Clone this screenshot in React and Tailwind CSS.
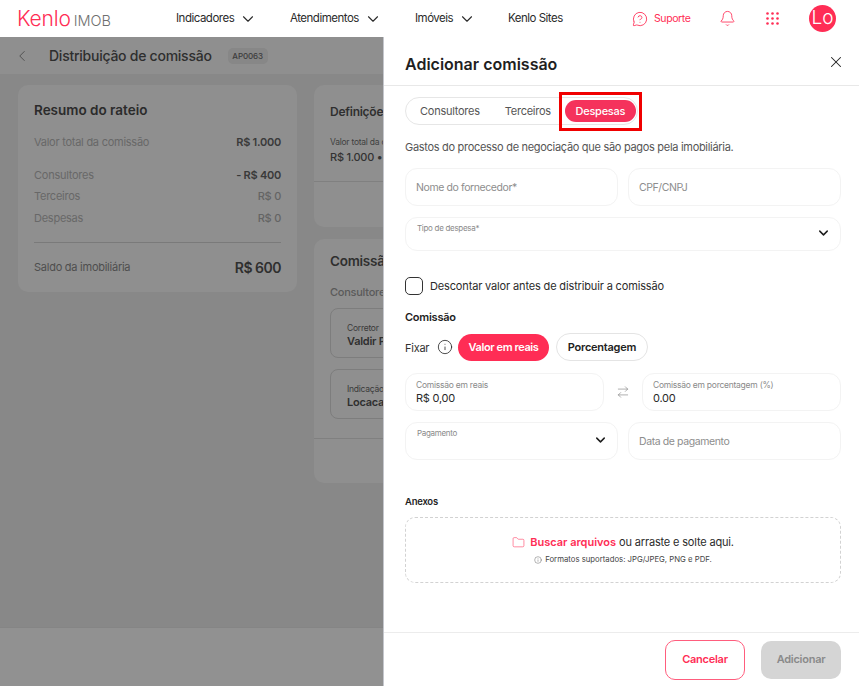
import React from 'react';
import { ChevronDown, ChevronLeft, X, Info, ArrowRightLeft, Bell, Folder, MessageCircleQuestion } from 'lucide-react';

const font = { fontFamily: 'Inter, "Noto Sans", sans-serif' };

const NavItem = ({ label, arrow = true, className = '' }) => (
  <div className={`flex items-center gap-[5px] text-[11.5px] tracking-[-0.5px] text-[#2b2b2b] ${className}`}>
    <span>{label}</span>
    {arrow && <ChevronDown size={18} strokeWidth={1.5} />}
  </div>
);

const Row = ({ label, value, strong }) => (
  <div className="flex items-center justify-between text-[11px]">
    <span className="text-[#686868]">{label}</span>
    <span className={strong ? 'font-semibold text-[#3a3a3a]' : 'font-medium text-[#646464]'}>{value}</span>
  </div>
);

const Field = ({ label, className = '' }) => (
  <div className={`flex h-[38px] items-center rounded-[12px] border border-[#f3f3f3] px-[10px] pt-px text-[10.5px] tracking-[-0.4px] text-[#8d8d8d] ${className}`}>
    {label}
  </div>
);

const SelectField = ({ label, className = '' }) => (
  <div className={`relative rounded-[12px] border border-[#f3f3f3] pl-[11px] pr-[10px] ${className}`}>
    <span className="absolute top-[4px] text-[8px] tracking-[-0.3px] text-[#8a8a8a]">{label}</span>
    <ChevronDown size={15} strokeWidth={2.4} className="absolute right-[9px] top-1/2 -mt-px -translate-y-1/2 text-[#1f1f1f]" />
  </div>
);

const ValueField = ({ label, value }) => (
  <div className="flex h-[38px] flex-1 flex-col justify-center rounded-[12px] border border-[#f3f3f3] px-[10px]">
    <span className="text-[8.5px] leading-[11px] text-[#8a8a8a]">{label}</span>
    <span className="text-[11px] leading-[14px] text-[#2a2a2a]">{value}</span>
  </div>
);

const GridIcon = () => (
  <svg width="13" height="13" viewBox="0 0 13 13" fill="#ff2d55">
    {[1.5, 6.5, 11.5].map((y) =>
      [1.5, 6.5, 11.5].map((x) => <circle key={`${x}-${y}`} cx={x} cy={y} r="1.3" />)
    )}
  </svg>
);

export default function App() {
  return (
    <div style={font} className="flex h-[686px] w-[859px] flex-col overflow-hidden bg-white tracking-[-0.25px]">
      {/* Top bar */}
      <header className="flex h-[37px] shrink-0 items-center bg-white">
        <div className="ml-[17px] flex w-[159px] items-baseline">
          <span className="text-[21px] font-light leading-none tracking-[-0.2px] text-[#ff2d55]">Kenlo</span>
          <span className="ml-[3px] text-[14.5px] font-light leading-none tracking-normal text-[#6f6f6f]">IMOB</span>
        </div>
        <NavItem label="Indicadores" className="w-[114px]" />
        <NavItem label="Atendimentos" className="w-[125px]" />
        <NavItem label="Imóveis" className="w-[93px]" />
        <NavItem label="Kenlo Sites" arrow={false} className="w-[124px]" />
        <div className="flex w-[87px] items-center gap-[6px] text-[10.5px] tracking-[-0.4px] text-[#ff2d55]">
          <MessageCircleQuestion size={16} strokeWidth={1.3} />
          <span>Suporte</span>
        </div>
        <Bell size={17} strokeWidth={1.2} className="text-[#ff2d55]" />
        <div className="ml-[30px]"><GridIcon /></div>
        <div className="ml-[30px] flex h-[27px] w-[27px] items-center justify-center rounded-full bg-[#ff2d55] text-[19px] font-light tracking-normal text-white">
          Lo
        </div>
      </header>

      <div className="flex min-h-0 flex-1">
        {/* Dimmed page behind the drawer */}
        <div className="flex w-[383px] shrink-0 flex-col overflow-hidden bg-[#888888] text-[#2f2f2f]">
          <div className="flex h-[37px] shrink-0 items-center bg-[#8f8f8f] pl-[13px]">
            <ChevronLeft size={18} strokeWidth={1} className="text-[#3d3d3d]" />
            <span className="ml-[18px] whitespace-nowrap text-[14px] font-medium text-[#2e2e2e]">Distribuição de comissão</span>
            <span className="ml-[16px] flex h-[16px] w-[40px] shrink-0 items-center justify-center rounded-[5px] bg-[#878787] text-[8px] font-medium tracking-[-0.1px] text-[#3c3c3c]">AP0063</span>
          </div>

          <div className="flex min-h-0 flex-1 items-start gap-[17px] pl-[18px] pt-[11px]">
            <section className="flex h-[207px] w-[279px] shrink-0 flex-col rounded-[10px] bg-[#8f8f8f] px-[16px] pt-[16px]">
              <h2 className="text-[13.5px] font-semibold leading-[18px] tracking-normal text-[#2b2b2b]">Resumo do rateio</h2>
              <div className="mt-[15px]"><Row label="Valor total da comissão" value="R$ 1.000" strong /></div>
              <div className="mt-[16px] flex flex-col gap-[5px]">
                <Row label="Consultores" value="- R$ 400" strong />
                <Row label="Terceiros" value="R$ 0" />
                <Row label="Despesas" value="R$ 0" />
              </div>
              <div className="mt-[16px] border-t border-[#7a7a7a]" />
              <div className="mt-[14px] flex items-center justify-between">
                <span className="text-[11px] text-[#4e4e4e]">Saldo da imobiliária</span>
                <span className="text-[14px] font-semibold tracking-[-0.5px] text-[#2f2f2f]">R$ 600</span>
              </div>
            </section>

            <div className="flex w-[200px] shrink-0 flex-col gap-[12px]">
              <section className="h-[142px] rounded-[10px] bg-[#8f8f8f]">
                <div className="h-[97px] whitespace-nowrap border-b border-[#808080] pl-[16px] pt-[19px]">
                  <h2 className="text-[12px] font-semibold leading-[16px] text-[#2f2f2f]">Definições</h2>
                  <p className="mt-[17px] text-[8.5px] leading-[11px] text-[#3f3f3f]">Valor total da comissão</p>
                  <p className="mt-[2px] text-[11px] font-medium leading-[14px] text-[#333]">R$ 1.000 • 10%</p>
                </div>
              </section>
              <section className="h-[244px] rounded-[10px] bg-[#8f8f8f]">
                <div className="h-[200px] whitespace-nowrap border-b border-[#808080] pl-[16px] pt-[13px]">
                  <h2 className="text-[13.5px] font-semibold leading-[18px] text-[#2f2f2f]">Comissão</h2>
                  <p className="mt-[15px] text-[11px] font-medium leading-[14px] text-[#5a5a5a]">Consultores</p>
                  <div className="mt-[9px] h-[50px] rounded-[8px] border border-[#7d7d7d] pl-[16px] pt-[14px]">
                    <p className="text-[8.5px] leading-[11px] text-[#3a3a3a]">Corretor</p>
                    <p className="text-[11px] font-semibold leading-[15px] text-[#2f2f2f]">Valdir Pereira</p>
                  </div>
                  <div className="mt-[11px] h-[50px] rounded-[8px] border border-[#7d7d7d] pl-[16px] pt-[14px]">
                    <p className="text-[8.5px] leading-[11px] text-[#3a3a3a]">Indicação</p>
                    <p className="text-[11px] font-semibold leading-[15px] text-[#2f2f2f]">Locacao</p>
                  </div>
                </div>
              </section>
            </div>
          </div>

          <div className="h-[59px] shrink-0 border-t border-[#858585] bg-[#919191]" />
        </div>

        {/* Drawer */}
        <aside className="flex w-[476px] flex-col border-l border-[#c4c6cc] bg-white">
          <div className="flex h-[49px] shrink-0 items-center justify-between border-b border-[#e8e8e8] pl-[21px] pr-[14px] pt-[5px]">
            <h1 className="text-[16px] font-semibold tracking-normal text-[#1f1f1f]">Adicionar comissão</h1>
            <X size={18} strokeWidth={1.4} className="-mt-[3px] text-[#222]" />
          </div>

          <div className="min-h-0 flex-1 pl-[21px] pr-[18px]">
            <div className="relative mt-[11px] flex h-[28px] w-[233px] items-center rounded-full border border-[#e6e6e6] text-[11px] text-[#555]">
              <span className="ml-[14px]">Consultores</span>
              <span className="ml-[25px]">Terceiros</span>
              <span className="ml-[14px] flex h-[22px] w-[71px] items-center justify-center rounded-full bg-[#f5325c] font-medium text-white">Despesas</span>
              <div className="absolute left-[153px] top-[-6px] h-[39px] w-[83px] border-[3px] border-[#f00000]" />
            </div>

            <p className="mt-[14px] text-[11px] leading-[16px] tracking-[-0.3px] text-[#555]">Gastos do processo de negociação que são pagos pela imobiliária.</p>

            <div className="mt-[13px] flex gap-[10px]">
              <Field label="Nome do fornecedor*" className="w-[213px]" />
              <Field label="CPF/CNPJ" className="flex-1" />
            </div>
            <SelectField label="Tipo de despesa*" className="mt-[11px] h-[34px]" />

            <label className="mt-[26px] flex items-center gap-[7px]">
              <span className="h-[18px] w-[18px] rounded-[5px] border border-[#333]" />
              <span className="pt-px text-[11px] tracking-[-0.15px] text-[#2b2b2b]">Descontar valor antes de distribuir a comissão</span>
            </label>

            <h3 className="mt-[15px] text-[11px] font-semibold leading-[14px] text-[#1f1f1f]">Comissão</h3>

            <div className="mt-[9px] flex items-center">
              <span className="w-[25px] pt-px text-[11px] leading-[14px] text-[#333]">Fixar</span>
              <Info size={16} strokeWidth={1.2} className="ml-[7px] text-[#222]" />
              <span className="ml-[5px] flex h-[27px] w-[91px] items-center justify-center rounded-full bg-[#ff2d55] text-[11px] font-semibold tracking-[-0.4px] text-white">Valor em reais</span>
              <span className="ml-[7px] flex h-[28px] w-[92px] items-center justify-center rounded-full border border-[#e4e4e4] text-[11px] font-semibold text-[#222]">Porcentagem</span>
            </div>

            <div className="mt-[12px] flex items-center">
              <ValueField label="Comissão em reais" value="R$ 0,00" />
              <ArrowRightLeft size={14} strokeWidth={1} className="mx-[12px] shrink-0 text-[#777]" />
              <ValueField label="Comissão em porcentagem (%)" value="0.00" />
            </div>

            <div className="mt-[11px] flex gap-[10px]">
              <SelectField label="Pagamento" className="h-[38px] w-[213px]" />
              <Field label="Data de pagamento" className="flex-1" />
            </div>

            <h3 className="mt-[36px] text-[9.5px] font-semibold leading-[12px] text-[#1f1f1f]">Anexos</h3>

            <div className="mt-[9px] flex h-[66px] flex-col items-center justify-center rounded-[10px] border border-dashed border-[#d2d2d2]">
              <div className="flex items-center text-[11px] tracking-[-0.17px] text-[#2b2b2b]">
                <Folder size={13} strokeWidth={1} className="mr-[5px] text-[#ff2d55]" />
                <span className="font-semibold tracking-normal text-[#ff2d55]">Buscar arquivos</span>
                <span className="ml-[3px]">ou arraste e solte aqui.</span>
              </div>
              <div className="mt-[4px] flex items-center gap-[3px] text-[7.75px] tracking-normal text-[#444]">
                <Info size={8} strokeWidth={1.2} />
                <span>Formatos suportados: JPG/JPEG, PNG e PDF.</span>
              </div>
            </div>
          </div>

          <div className="flex h-[54px] shrink-0 items-center justify-end gap-[16px] border-t border-[#ececec] pr-[18px]">
            <button className="h-[40px] w-[80px] rounded-[10px] border border-[#ff5d7d] text-[11px] font-semibold text-[#ff2d55]">Cancelar</button>
            <button className="h-[38px] w-[80px] rounded-[10px] bg-[#d5d5d5] text-[11px] font-semibold text-[#8a8a8a]">Adicionar</button>
          </div>
        </aside>
      </div>
    </div>
  );
}
